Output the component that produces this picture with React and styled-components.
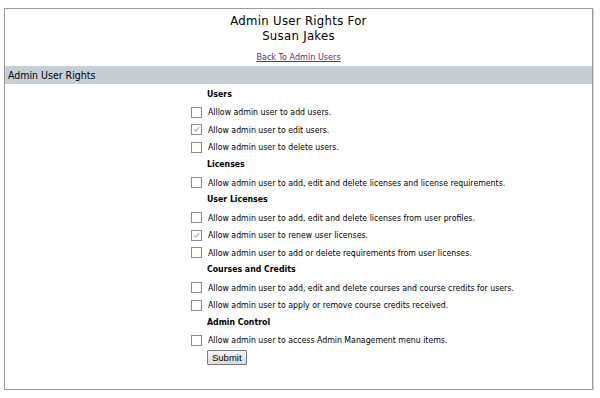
import React from "react";
import styled, { createGlobalStyle } from "styled-components";

const GlobalStyle = createGlobalStyle`
  html, body {
    margin: 0;
    padding: 0;
    background: #ffffff;
  }
  body {
    font-family: "DejaVu Sans Condensed", "DejaVu Sans", Verdana, sans-serif;
    color: #000;
  }
`;

const Page = styled.div`
  padding: 8px 7px 0 4px;
`;

const Panel = styled.div`
  border: 1px solid #9a9a9a;
  box-shadow: 1px 1px 0 #d4d4d4;
  height: 382px;
  box-sizing: border-box;
`;

const Title = styled.h1`
  margin: 0;
  padding-top: 4px;
  text-align: center;
  font-size: 13px;
  letter-spacing: 0.3px;
  font-weight: normal;
  line-height: 15px;
`;

const LinkRow = styled.div`
  text-align: center;
  padding: 9px 0 3px;
  font-size: 9px;
  line-height: 11px;
`;

const BackLink = styled.a`
  color: #6b2a7a;
  text-decoration: underline;
`;

const SectionBar = styled.div`
  background: #c6cfd6;
  height: 18px;
  line-height: 18px;
  padding-left: 3px;
  font-size: 10.5px;
`;

const Rights = styled.div`
  padding: 2px 0 0 186px;
  font-size: 8.7px;
`;

const GroupHeading = styled.div`
  font-weight: bold;
  padding-left: 16px;
  height: 17.55px;
  line-height: 17.55px;
`;

const Row = styled.label`
  display: flex;
  align-items: center;
  gap: 6px;
  height: 17.55px;
`;

const Box = styled.span`
  width: 9px;
  height: 9px;
  border: 1px solid #8c8c8c;
  background: #fff;
  display: inline-flex;
  align-items: center;
  justify-content: center;
  flex-shrink: 0;
`;

const SubmitButton = styled.button`
  margin: 1px 0 0 16px;
  font-family: "Liberation Sans", Arial, sans-serif;
  font-size: 9.5px;
  padding: 1px 4px;
  height: 15px;
  line-height: 11px;
  border: 1px solid #7a7a7a;
  border-radius: 1px;
  background: linear-gradient(#f4f4f4, #dcdcdc);
  color: #000;
`;

const Checkbox = ({ checked }) => (
  <Box>
    {checked && (
      <svg width="7" height="7" viewBox="0 0 7 7">
        <path d="M1 3.6 L2.8 5.3 L6 1.2" fill="none" stroke="#8a8a8a" strokeWidth="1" />
      </svg>
    )}
  </Box>
);

const groups = [
  {
    title: "Users",
    rights: [
      { label: "Alllow admin user to add users." },
      { label: "Allow admin user to edit users.", checked: true },
      { label: "Allow admin user to delete users." },
    ],
  },
  {
    title: "Licenses",
    rights: [
      { label: "Allow admin user to add, edit and delete licenses and license requirements." },
    ],
  },
  {
    title: "User Licenses",
    rights: [
      { label: "Allow admin user to add, edit and delete licenses from user profiles." },
      { label: "Allow admin user to renew user licenses.", checked: true },
      { label: "Allow admin user to add or delete requirements from user licenses." },
    ],
  },
  {
    title: "Courses and Credits",
    rights: [
      { label: "Allow admin user to add, edit and delete courses and course credits for users." },
      { label: "Allow admin user to apply or remove course credits received." },
    ],
  },
  {
    title: "Admin Control",
    rights: [{ label: "Allow admin user to access Admin Management menu items." }],
  },
];

export default function App() {
  return (
    <Page>
      <GlobalStyle />
      <Panel>
        <Title>
          Admin User Rights For
          <br />
          Susan Jakes
        </Title>
        <LinkRow>
          <BackLink href="#">Back To Admin Users</BackLink>
        </LinkRow>
        <SectionBar>Admin User Rights</SectionBar>
        <Rights>
          {groups.map((g) => (
            <div key={g.title}>
              <GroupHeading>{g.title}</GroupHeading>
              {g.rights.map((r) => (
                <Row key={r.label}>
                  <Checkbox checked={r.checked} />
                  {r.label}
                </Row>
              ))}
            </div>
          ))}
          <SubmitButton type="button">Submit</SubmitButton>
        </Rights>
      </Panel>
    </Page>
  );
}
